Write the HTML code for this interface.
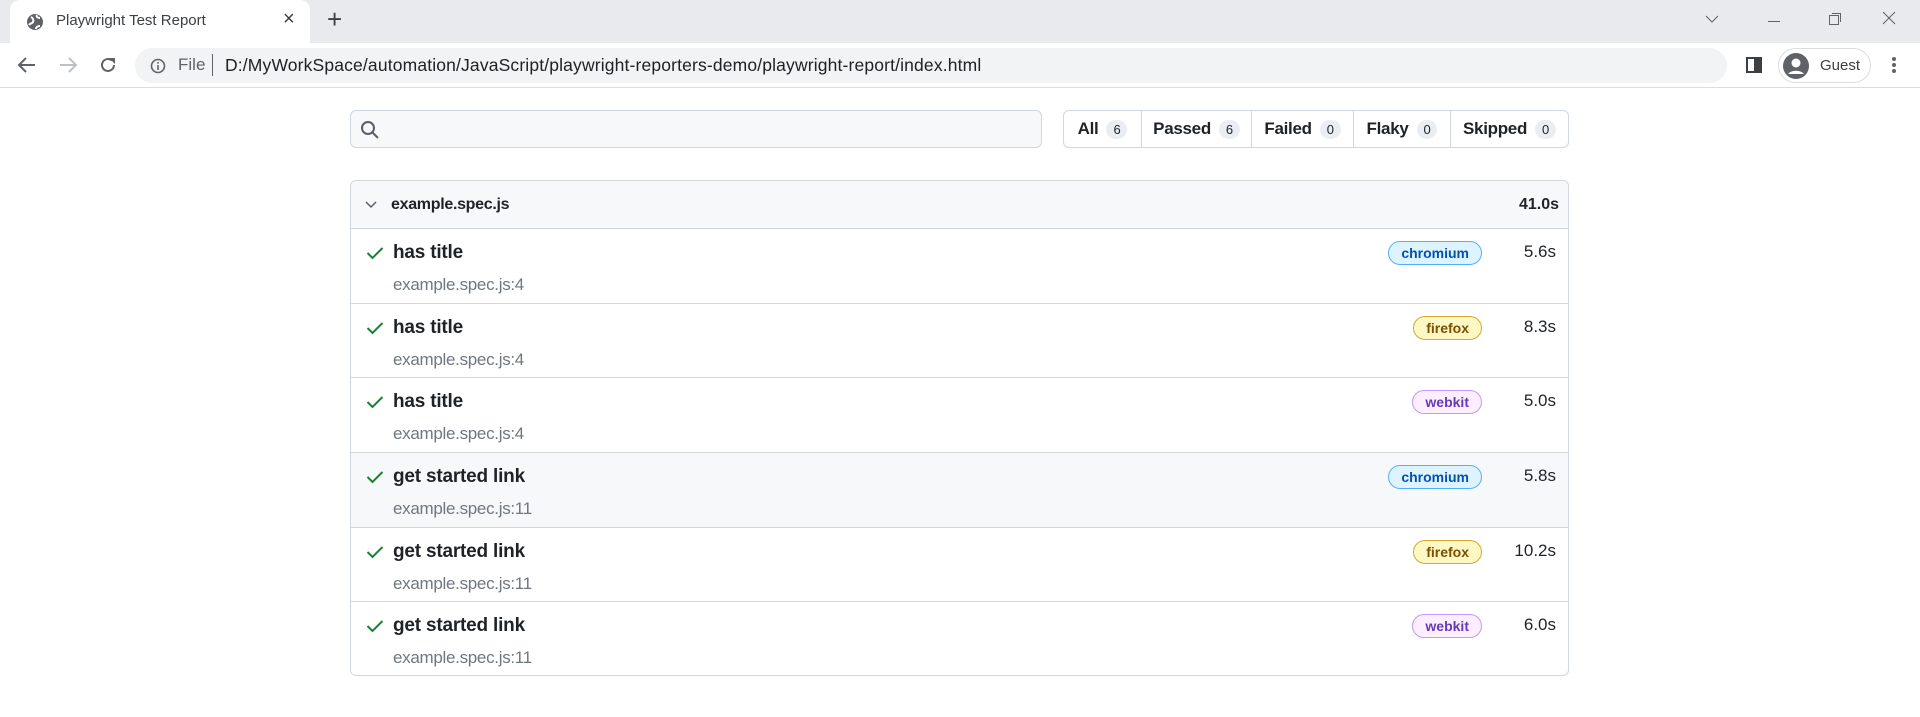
<!DOCTYPE html>
<html><head><meta charset="utf-8"><style>
*{box-sizing:border-box;margin:0;padding:0}
body{width:1920px;height:717px;overflow:hidden;background:#fff;font-family:"Liberation Sans",sans-serif;position:relative;color:#1f2328}
.abs{position:absolute}
.tabbar{left:0;top:0;width:1920px;height:43px;background:#e8eaed}
.tab{left:10px;top:0;width:300px;height:43px;background:#fff;border-radius:10px 10px 0 0}
.toolbar{left:0;top:43px;width:1920px;height:45px;background:#fff;border-bottom:1px solid #dadce0}
.addr{left:135px;top:48px;width:1592px;height:35px;background:#f1f3f4;border-radius:18px}
.search{left:350px;top:110px;width:692px;height:38px;background:#f6f8fa;border:1px solid #d0d7de;border-radius:6px}
.filter{left:1063px;top:110px;width:506px;height:38px;border:1px solid #d0d7de;border-radius:6px;display:flex;font-size:17px;font-weight:bold;letter-spacing:-0.3px}
.filter div{display:flex;align-items:center;justify-content:center;border-right:1px solid #d0d7de;height:100%}
.filter div:last-child{border-right:none}
.cnt{display:inline-block;background:#eaeef2;border-radius:10px;font-size:13px;font-weight:normal;padding:2px 7px;margin-left:8px}
.card{left:350px;top:180px;width:1219px;height:496px;border:1px solid #d0d7de;border-radius:6px;overflow:hidden}
.hdr{height:48px;background:#f6f8fa;border-bottom:1px solid #d0d7de;position:relative;font-size:16px;font-weight:bold}
.row{height:74.7px;border-bottom:1px solid #d0d7de;position:relative}
.row:last-child{border-bottom:none}
.t{position:absolute;left:42px;top:13px;font-size:19px;font-weight:bold;letter-spacing:-0.2px}
.s{position:absolute;left:42px;top:46px;font-size:17px;color:#6e7781;letter-spacing:-0.3px}
.ck{position:absolute;left:15px;top:17px}
.b{position:absolute;top:12px;height:24px;border:1px solid;border-radius:12px;font-size:14px;font-weight:bold;line-height:22px;padding:0 12px}
.ch{right:86px;background:#ddf4ff;border-color:#54aeff;color:#0550ae}
.ff{right:86px;background:#fff8c5;border-color:#d4a72c;color:#7d4e00}
.wk{right:86px;background:#fbefff;border-color:#c297ff;color:#6639ba}
.d{position:absolute;right:12px;top:13px;font-size:17px}
</style></head><body>
<div class="abs tabbar"></div>
<div class="abs tab"></div>
<svg class="abs" style="left:26px;top:13px" width="18" height="18" viewBox="0 0 18 18"><circle cx="9" cy="9" r="8" fill="#5f6368"/><path d="M5 4c2 1 3 3 2 5s-3 1-4 3M11 2c-1 2 1 3 3 3M10 16c0-2 2-3 4-3" stroke="#fff" stroke-width="2" fill="none"/></svg>
<div class="abs" style="left:56px;top:12px;font-size:15px;color:#3c4043">Playwright Test Report</div>
<div class="abs" style="left:283px;top:8px;font-size:20px;color:#3c4043">×</div>
<div class="abs" style="left:327px;top:4px;font-size:26px;color:#3c4043">+</div>
<svg class="abs" style="left:1705px;top:14px" width="14" height="10"><path d="M1 2l6 6 6-6" stroke="#5f6368" fill="none"/></svg>
<div class="abs" style="left:1768px;top:21px;width:12px;height:1px;background:#5f6368"></div>
<svg class="abs" style="left:1828px;top:12px" width="14" height="14"><rect x="1.5" y="3.5" width="9" height="9" fill="none" stroke="#5f6368"/><path d="M4 1.5h8.5v8.5" fill="none" stroke="#5f6368"/></svg>
<svg class="abs" style="left:1882px;top:11px" width="14" height="14"><path d="M1 1l12 12M13 1L1 13" stroke="#5f6368"/></svg>
<div class="abs toolbar"></div>
<svg class="abs" style="left:17px;top:56px" width="20" height="18"><path d="M18 9H3M9 2L2 9l7 7" stroke="#5f6368" stroke-width="2" fill="none"/></svg>
<svg class="abs" style="left:58px;top:56px" width="20" height="18"><path d="M2 9h15M11 2l7 7-7 7" stroke="#bdc1c6" stroke-width="2" fill="none"/></svg>
<svg class="abs" style="left:98px;top:55px" width="20" height="20"><path d="M16 10a6 6 0 1 1-2-4.5" stroke="#5f6368" stroke-width="2" fill="none"/><path d="M11 3h6v6z" fill="#5f6368"/></svg>
<div class="abs addr"></div>
<svg class="abs" style="left:150px;top:58px" width="16" height="16"><circle cx="8" cy="8" r="6.5" stroke="#5f6368" stroke-width="1.6" fill="none"/><rect x="7.2" y="7" width="1.6" height="5" fill="#5f6368"/><rect x="7.2" y="4" width="1.6" height="1.6" fill="#5f6368"/></svg>
<div class="abs" style="left:178px;top:55px;font-size:17px;color:#5f6368">File</div>
<div class="abs" style="left:212px;top:54px;width:1px;height:22px;background:#5f6368"></div>
<div class="abs" style="left:225px;top:55px;font-size:17.5px;color:#202124;letter-spacing:0.15px">D:/MyWorkSpace/automation/JavaScript/playwright-reporters-demo/playwright-report/index.html</div>
<svg class="abs" style="left:1746px;top:57px" width="16" height="16"><rect x="1" y="1" width="14" height="14" fill="none" stroke="#3c4043" stroke-width="2"/><rect x="8" y="1" width="7" height="14" fill="#3c4043"/></svg>
<div class="abs" style="left:1778px;top:48px;width:93px;height:35px;border:1px solid #dadce0;border-radius:18px"></div>
<svg class="abs" style="left:1783px;top:53px" width="26" height="26"><circle cx="13" cy="13" r="13" fill="#5f6368"/><circle cx="13" cy="10" r="4.5" fill="#fff"/><path d="M5 21a9 6 0 0 1 16 0" fill="#fff"/></svg>
<div class="abs" style="left:1820px;top:57px;font-size:15px;color:#3c4043">Guest</div>
<div class="abs" style="left:1892px;top:57px;width:4px;height:4px;background:#5f6368;border-radius:2px;box-shadow:0 6px 0 #5f6368,0 12px 0 #5f6368"></div>

<div class="abs search"></div>
<svg class="abs" style="left:360px;top:120px" width="20" height="20"><circle cx="8" cy="8" r="6" stroke="#57606a" stroke-width="2" fill="none"/><path d="M12.5 12.5L18 18" stroke="#57606a" stroke-width="2"/></svg>
<div class="abs filter">
<div style="width:78px">All<span class="cnt">6</span></div>
<div style="width:110px">Passed<span class="cnt">6</span></div>
<div style="width:102px">Failed<span class="cnt">0</span></div>
<div style="width:97px">Flaky<span class="cnt">0</span></div>
<div style="width:117px">Skipped<span class="cnt">0</span></div>
</div>

<div class="abs card">
<div class="hdr"><svg style="position:absolute;left:14px;top:20px" width="12" height="8"><path d="M1 1l5 5 5-5" stroke="#57606a" stroke-width="1.5" fill="none"/></svg><span style="position:absolute;left:40px;top:15px;letter-spacing:-0.3px">example.spec.js</span><span style="position:absolute;right:9px;top:15px">41.0s</span></div>
<div class="row"><svg class="ck" width="18" height="14"><path d="M1.5 7l5 5 10-10" stroke="#1a7f37" stroke-width="2" fill="none"/></svg><span class="t">has title</span><span class="s">example.spec.js:4</span><span class="b ch">chromium</span><span class="d">5.6s</span></div>
<div class="row"><svg class="ck" width="18" height="14"><path d="M1.5 7l5 5 10-10" stroke="#1a7f37" stroke-width="2" fill="none"/></svg><span class="t">has title</span><span class="s">example.spec.js:4</span><span class="b ff">firefox</span><span class="d">8.3s</span></div>
<div class="row"><svg class="ck" width="18" height="14"><path d="M1.5 7l5 5 10-10" stroke="#1a7f37" stroke-width="2" fill="none"/></svg><span class="t">has title</span><span class="s">example.spec.js:4</span><span class="b wk">webkit</span><span class="d">5.0s</span></div>
<div class="row" style="background:#f6f8fa"><svg class="ck" width="18" height="14"><path d="M1.5 7l5 5 10-10" stroke="#1a7f37" stroke-width="2" fill="none"/></svg><span class="t">get started link</span><span class="s">example.spec.js:11</span><span class="b ch">chromium</span><span class="d">5.8s</span></div>
<div class="row"><svg class="ck" width="18" height="14"><path d="M1.5 7l5 5 10-10" stroke="#1a7f37" stroke-width="2" fill="none"/></svg><span class="t">get started link</span><span class="s">example.spec.js:11</span><span class="b ff">firefox</span><span class="d">10.2s</span></div>
<div class="row"><svg class="ck" width="18" height="14"><path d="M1.5 7l5 5 10-10" stroke="#1a7f37" stroke-width="2" fill="none"/></svg><span class="t">get started link</span><span class="s">example.spec.js:11</span><span class="b wk">webkit</span><span class="d">6.0s</span></div>
</div>
</body></html>
